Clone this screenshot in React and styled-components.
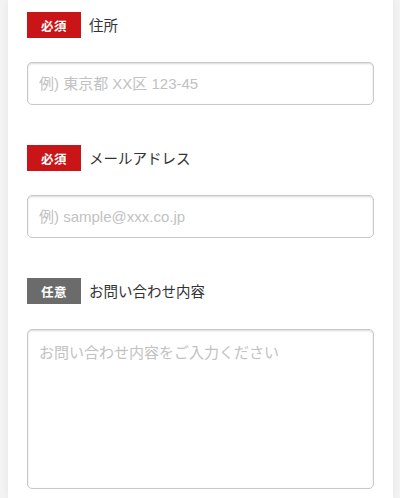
import React from "react";
import styled, { createGlobalStyle } from "styled-components";

const Global = createGlobalStyle`
  html, body { margin: 0; padding: 0; background: #f3f3f3; }
  body { font-family: "Liberation Sans", "Noto Sans CJK JP", sans-serif; }
`;

const Card = styled.div`
  margin: 0 7px 0 8px;
  background: #fff;
  box-shadow: 0 0 8px rgba(0, 0, 0, 0.06);
  padding: 12px 19px 9px 19px;
  display: flex;
  flex-direction: column;
  gap: 40px;
`;

const Field = styled.div`
  display: flex;
  flex-direction: column;
  gap: ${(p) => (p.$gap ? p.$gap : 24)}px;
`;

const LabelRow = styled.div`
  display: flex;
  align-items: center;
  gap: 8px;
  height: 26px;
`;

const Badge = styled.span`
  width: 54px;
  height: 26px;
  background: ${(p) => (p.$required ? "#c91517" : "#6b6b6b")};
  color: #fff;
  font-family: "Noto Sans CJK JP", sans-serif;
  font-size: 12.5px;
  font-weight: 700;
  display: flex;
  align-items: center;
  justify-content: center;
  letter-spacing: 0.5px;
`;

const Label = styled.span`
  font-family: "Noto Sans CJK JP", sans-serif;
  font-size: 14.5px;
  color: #333;
  line-height: 1;
`;

const Input = styled.input`
  box-sizing: border-box;
  width: 347px;
  height: 43px;
  border: 1px solid #c8c8c8;
  border-radius: 5px;
  box-shadow: inset 0 1px 2px rgba(0, 0, 0, 0.15);
  padding: 0 11px;
  font-family: "Liberation Sans", "Noto Sans CJK JP", sans-serif;
  font-size: 15px;
  color: #333;
  outline: none;
  &::placeholder { color: #c2c2c2; }
`;

const TextArea = styled.textarea`
  box-sizing: border-box;
  width: 347px;
  height: 160px;
  border: 1px solid #c8c8c8;
  border-radius: 5px;
  box-shadow: inset 0 1px 2px rgba(0, 0, 0, 0.15);
  padding: 11px 11px;
  font-family: "Noto Sans CJK JP", sans-serif;
  font-size: 15px;
  line-height: 1.4;
  color: #333;
  outline: none;
  resize: none;
  display: block;
  &::placeholder { color: #c2c2c2; }
`;

export default function App() {
  return (
    <>
      <Global />
      <Card>
        <Field>
          <LabelRow>
            <Badge $required>必須</Badge>
            <Label>住所</Label>
          </LabelRow>
          <Input placeholder="例) 東京都 XX区 123-45" />
        </Field>
        <Field>
          <LabelRow>
            <Badge $required>必須</Badge>
            <Label>メールアドレス</Label>
          </LabelRow>
          <Input placeholder="例) sample@xxx.co.jp" />
        </Field>
        <Field $gap={25}>
          <LabelRow>
            <Badge>任意</Badge>
            <Label>お問い合わせ内容</Label>
          </LabelRow>
          <TextArea placeholder="お問い合わせ内容をご入力ください" />
        </Field>
      </Card>
    </>
  );
}
